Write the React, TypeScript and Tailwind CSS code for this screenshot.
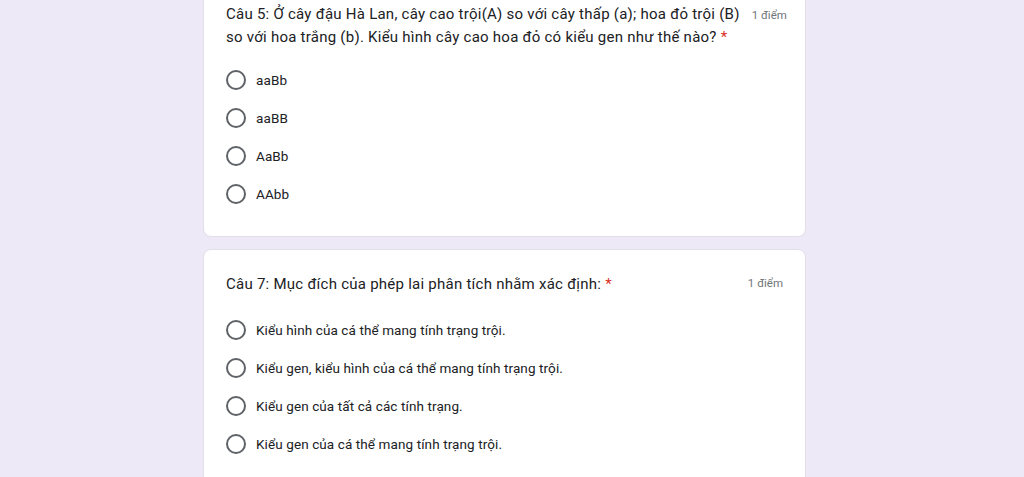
import React from "react";

function Radio() {
  return <div className="w-5 h-5 rounded-full border-2 border-[#5f6368] shrink-0" />;
}

function Option({ label }: { label: string }) {
  return (
    <div className="flex items-center h-[38px] gap-[10px]">
      <Radio />
      <span className="text-[13.5px] tracking-[0.1px] text-[#202124]">{label}</span>
    </div>
  );
}

export default function App() {
  return (
    <div
      className="w-[1024px] h-[477px] overflow-hidden bg-[#ede9f7] pl-[203px]"
      style={{ fontFamily: "Roboto, 'Noto Sans', Arial, sans-serif" }}
    >
      <div className="w-[603px] bg-white rounded-b-[8px] border border-t-0 border-[#e2dfea] px-[22px] pt-[4px] pb-[23px]">
        <div className="text-[15px] leading-[21.5px] tracking-[0.25px] text-[#202124]">
          <div className="flex items-baseline whitespace-nowrap">
            <span>Câu 5: Ở cây đậu Hà Lan, cây cao trội(A) so với cây thấp (a); hoa đỏ trội (B)</span>
            <span className="text-[11.5px] tracking-normal text-[#70757a] ml-[12px]">1 điểm</span>
          </div>
          <div className="whitespace-nowrap">
            so với hoa trắng (b). Kiểu hình cây cao hoa đỏ có kiểu gen như thế nào?{" "}
            <span className="text-[#d93025]">*</span>
          </div>
        </div>
        <div className="mt-[13px] flex flex-col">
          <Option label="aaBb" />
          <Option label="aaBB" />
          <Option label="AaBb" />
          <Option label="AAbb" />
        </div>
      </div>
      <div className="mt-[12px] w-[603px] h-[300px] bg-white rounded-[8px] border border-[#e2dfea] px-[22px] pt-[23px]">
        <div className="flex justify-between items-center h-[22px]">
          <div className="text-[15px] tracking-[0.25px] text-[#202124]">
            Câu 7: Mục đích của phép lai phân tích nhằm xác định: <span className="text-[#d93025]">*</span>
          </div>
          <span className="text-[11.5px] text-[#70757a] whitespace-nowrap">1 điểm</span>
        </div>
        <div className="mt-[16px] flex flex-col">
          <Option label="Kiểu hình của cá thể mang tính trạng trội." />
          <Option label="Kiểu gen, kiểu hình của cá thể mang tính trạng trội." />
          <Option label="Kiểu gen của tất cả các tính trạng." />
          <Option label="Kiểu gen của cá thể mang tính trạng trội." />
        </div>
      </div>
    </div>
  );
}
